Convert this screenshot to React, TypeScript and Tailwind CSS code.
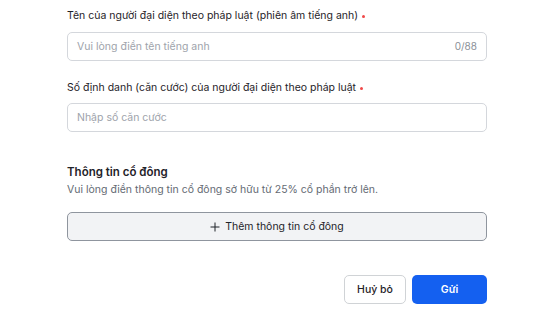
import React from "react";

export default function App() {
  return (
    <div
      className="w-[559px] h-[319px] bg-white overflow-hidden text-[#1f2329]"
      style={{ fontFamily: "Inter, 'Noto Sans', sans-serif" }}
    >
      <div className="ml-[67px] w-[420px] pt-[8px]">
        <div className="h-[16px] leading-[16px] text-[10.5px] flex items-center">
          <span>Tên của người đại diện theo pháp luật (phiên âm tiếng anh)</span>
          <span className="ml-[4px] w-[3px] h-[3px] rounded-full bg-[#f04848]" />
        </div>
        <div className="mt-[8px] h-[29px] border border-[#d4d7dc] rounded-[5px] flex items-center justify-between px-[9px] text-[10.5px]">
          <span className="text-[#9ea3ab]">Vui lòng điền tên tiếng anh</span>
          <span className="text-[#8a8f97] text-[10px]">0/88</span>
        </div>

        <div className="mt-[19px] h-[16px] leading-[16px] text-[10.5px] flex items-center">
          <span>Số định danh (căn cước) của người đại diện theo pháp luật</span>
          <span className="ml-[4px] w-[3px] h-[3px] rounded-full bg-[#f04848]" />
        </div>
        <div className="mt-[7px] h-[29px] border border-[#d4d7dc] rounded-[5px] flex items-center px-[9px] text-[10.5px]">
          <span className="text-[#9ea3ab]">Nhập số căn cước</span>
        </div>

        <div className="mt-[32px] h-[16px] leading-[16px] text-[11.5px] font-semibold text-[#1f2329]">
          Thông tin cổ đông
        </div>
        <div className="mt-[2px] h-[16px] leading-[16px] text-[10.5px] text-[#646a73]">
          Vui lòng điền thông tin cổ đông sở hữu từ 25% cổ phần trở lên.
        </div>

        <div className="mt-[14px] h-[29px] border border-[#8f959e] bg-[#f2f3f5] rounded-[5px] flex items-center justify-center text-[10.5px] text-[#1f2329]">
          <svg width="10" height="10" viewBox="0 0 10 10" className="mr-[5px]">
            <path d="M5 0.5v9M0.5 5h9" stroke="#1f2329" strokeWidth="1" />
          </svg>
          <span>Thêm thông tin cổ đông</span>
        </div>

        <div className="mt-[34px] flex justify-end gap-[6px]">
          <div className="w-[62px] h-[29px] border border-[#d0d3d6] rounded-[5px] flex items-center justify-center text-[10.5px] font-medium text-[#1f2329]">
            Huỷ bỏ
          </div>
          <div className="w-[75px] h-[29px] rounded-[5px] bg-[#1460f0] flex items-center justify-center text-[10.5px] font-semibold text-white">
            Gửi
          </div>
        </div>
      </div>
    </div>
  );
}
